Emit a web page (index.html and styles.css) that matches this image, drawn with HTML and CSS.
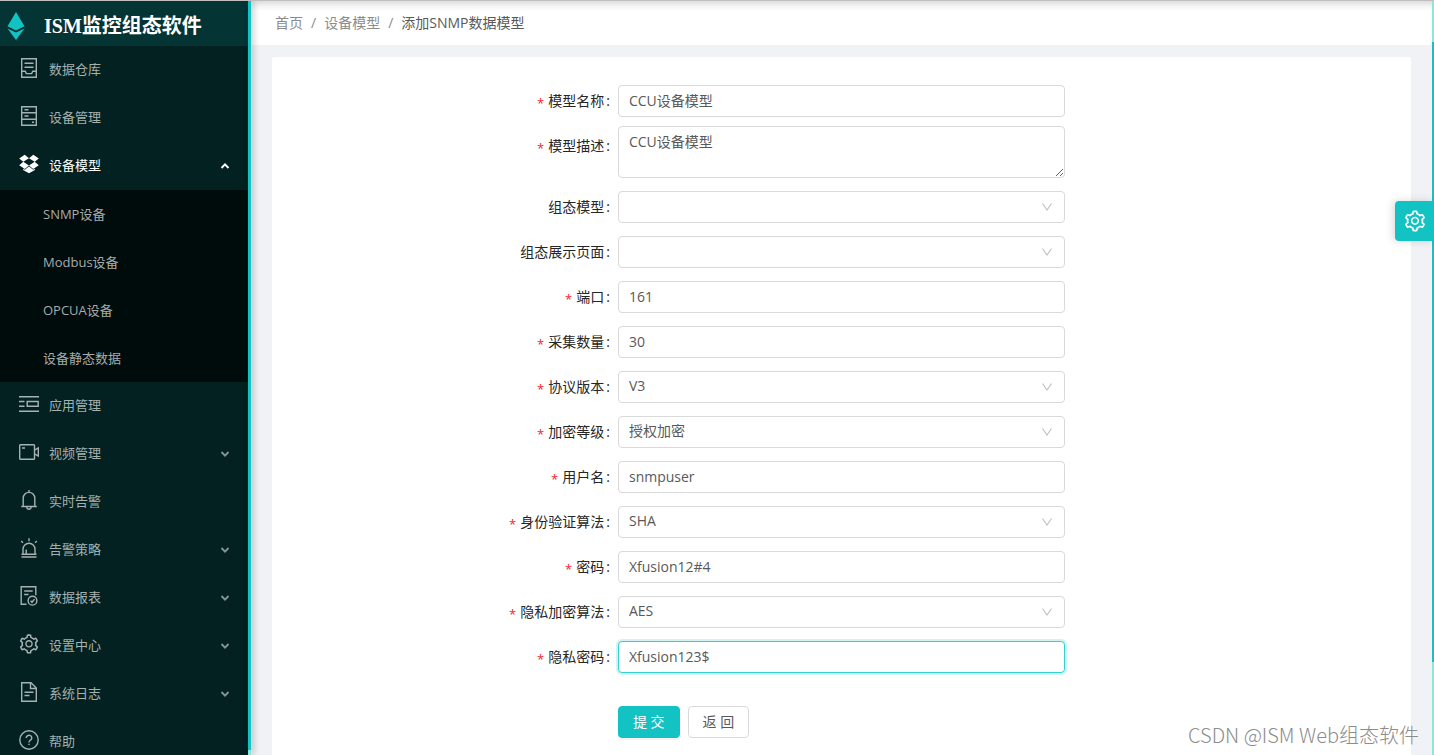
FILE: index.html
```html
<!DOCTYPE html>
<html lang="zh-CN">
<head>
<meta charset="utf-8">
<meta name="viewport" content="width=device-width, initial-scale=1">
<title>ISM监控组态软件</title>
<link rel="stylesheet" href="styles.css">
</head>
<body>
<svg class="defs" aria-hidden="true">
  <symbol id="gear" viewBox="0 0 1024 1024"><path fill="currentColor" d="M924.8 625.7l-65.5-56c3.1-19 4.7-38.4 4.7-57.8s-1.6-38.8-4.7-57.8l65.5-56a32.03 32.03 0 009.3-35.2l-.9-2.6a443.74 443.74 0 00-79.7-137.9l-1.8-2.1a32.12 32.12 0 00-35.1-9.5l-81.3 28.9c-30-24.6-63.5-44-99.7-57.6l-15.7-85a32.05 32.05 0 00-25.8-25.7l-2.7-.5c-52.1-9.4-106.9-9.4-159 0l-2.7.5a32.05 32.05 0 00-25.8 25.7l-15.8 85.4a351.86 351.86 0 00-99 57.4l-81.9-29.1a32 32 0 00-35.1 9.5l-1.8 2.1a446.02 446.02 0 00-79.7 137.9l-.9 2.6c-4.5 12.5-.8 26.5 9.3 35.2l66.3 56.6c-3.1 18.8-4.6 38-4.6 57.1 0 19.2 1.5 38.4 4.6 57.1L99 625.5a32.03 32.03 0 00-9.3 35.2l.9 2.6c18.1 50.4 44.9 96.9 79.7 137.9l1.8 2.1a32.12 32.12 0 0035.1 9.5l81.9-29.1c29.8 24.5 63.1 43.9 99 57.4l15.8 85.4a32.05 32.05 0 0025.8 25.7l2.7.5a449.4 449.4 0 00159 0l2.7-.5a32.05 32.05 0 0025.8-25.7l15.7-85a350 350 0 0099.7-57.6l81.3 28.9a32 32 0 0035.1-9.5l1.8-2.1c34.8-41.1 61.6-87.5 79.7-137.9l.9-2.6c4.5-12.3.8-26.3-9.3-35zM788.3 465.9c2.5 15.1 3.8 30.6 3.8 46.1s-1.3 31-3.8 46.1l-6.6 40.1 74.7 63.9a370.03 370.03 0 01-42.6 73.6L721 702.8l-31.4 25.8c-23.9 19.6-50.5 35-79.3 45.8l-38.1 14.3-17.9 97a377.5 377.5 0 01-85 0l-17.9-97.2-37.8-14.5c-28.5-10.8-55-26.2-78.7-45.7l-31.4-25.9-93.4 33.2c-17-22.9-31.2-47.6-42.6-73.6l75.5-64.5-6.5-40c-2.4-14.9-3.7-30.3-3.7-45.5 0-15.3 1.2-30.6 3.7-45.5l6.5-40-75.5-64.5c11.3-26.1 25.6-50.7 42.6-73.6l93.4 33.2 31.4-25.9c23.7-19.5 50.2-34.9 78.7-45.7l37.9-14.3 17.9-97.2c28.1-3.2 56.8-3.2 85 0l17.9 97 38.1 14.3c28.7 10.8 55.4 26.2 79.3 45.8l31.4 25.8 92.8-32.9c17 22.9 31.2 47.6 42.6 73.6L781.8 426l6.5 39.9zM512 326c-97.2 0-176 78.8-176 176s78.8 176 176 176 176-78.8 176-176-78.8-176-176-176zm79.2 255.2A111.6 111.6 0 01512 614c-29.9 0-58-11.7-79.2-32.8A111.6 111.6 0 01400 502c0-29.9 11.7-58 32.8-79.2C454 401.6 482.1 390 512 390c29.9 0 58 11.6 79.2 32.8A111.6 111.6 0 01624 502c0 29.9-11.7 58-32.8 79.2z"/></symbol>
  <symbol id="down" viewBox="0 0 10 10"><path d="M1.5 3l3.500 3.600L8.500 3" fill="none" stroke="currentColor" stroke-width="1.900"/></symbol>
  <symbol id="arrow" viewBox="0 0 12 12"><path d="M1.500 2.500L6 9l4.500-6.500" fill="none" stroke="currentColor" stroke-width="1.100"/></symbol>
</svg>

<div class="app">
  <aside class="sidebar">
    <div class="brand">
      <svg class="logo" viewBox="0 0 18 28" aria-hidden="true"><path d="M9 0L0.500 14.300 9 18.500l8.500-4.200z" fill="#13c2c2"/><path d="M.5 16.500L9 28l8.500-11.500L9 20.600z" fill="#13c2c2"/></svg>
      <h1 class="brand-name">ISM监控组态软件</h1>
    </div>
    <nav>
      <ul class="menu">
        <li><a class="item" href="#"><svg class="icon" viewBox="0 0 20 20"><path d="M2.700.7h14.600v18.600H2.700zM5.500 5.300h9M5.500 9.300h9M2.700 13.300h3.600l1 2.300h5.400l1-2.300h3.600"/></svg><span class="text">数据仓库</span></a></li>
        <li><a class="item" href="#"><svg class="icon" viewBox="0 0 20 20"><path d="M2.700.7h14.600v18.600H2.700zM2.700 6.700h14.600M2.700 13.300h14.600M5.500 3.700h4M5.500 10h4M13 16.200h2"/></svg><span class="text">设备管理</span></a></li>
        <li>
          <a class="item active" href="#"><svg class="icon solid" viewBox="0 0 20 20"><path d="M5.700.8L10 4.200 4.300 7.800.2 4.500zM14.300.8L10 4.200l5.700 3.600 4.100-3.300zM4.300 7.800L10 11.400l-4.200 3.500L.2 11.200zM15.700 7.800L10 11.400l4.200 3.500 5.600-3.700zM10 12.400l4.200 3.400 1.700-1.100v1.200L10 19.300l-5.900-3.400v-1.200l1.700 1.100z"/></svg><span class="text">设备模型</span><svg class="chev up"><use href="#down"/></svg></a>
          <ul class="submenu">
            <li><a class="subitem" href="#">SNMP设备</a></li>
            <li><a class="subitem" href="#">Modbus设备</a></li>
            <li><a class="subitem" href="#">OPCUA设备</a></li>
            <li><a class="subitem" href="#">设备静态数据</a></li>
          </ul>
        </li>
        <li><a class="item" href="#"><svg class="icon" viewBox="0 0 20 20"><path d="M0 2.700h20M0 17.300h20M0 7.500h5.500M0 12.300h5.500M8.200 7.500h11v4.800h-11z"/></svg><span class="text">应用管理</span></a></li>
        <li><a class="item" href="#"><svg class="icon" viewBox="0 0 20 20"><rect x=".7" y="2.700" width="14.800" height="14.600" rx=".8"/><path d="M3 6h3M15.500 8.200l3.800-2.300v8.200l-3.800-2.300"/></svg><span class="text">视频管理</span><svg class="chev"><use href="#down"/></svg></a></li>
        <li><a class="item" href="#"><svg class="icon" viewBox="0 0 20 20"><path d="M10 0v2M4.200 16.300V8.200a5.800 5.800 0 0111.600 0v8.100M2.200 16.500h15.600M7.800 17a2.200 2.200 0 004.400 0"/></svg><span class="text">实时告警</span></a></li>
        <li><a class="item" href="#"><svg class="icon" viewBox="0 0 20 20"><path d="M10 .3v3M2.200 3l1.800 1.800M17.800 3L16 4.800M4 16.200v-5a6 6 0 0112 0v5M2.500 16.200h15M2.500 19h15M7.200 15.500v-4"/></svg><span class="text">告警策略</span><svg class="chev"><use href="#down"/></svg></a></li>
        <li><a class="item" href="#"><svg class="icon" viewBox="0 0 20 20"><path d="M7.500 18.300H2.200V.7h14.600v8.500M5.200 5h8.500M5.200 8.500h4.300"/><circle cx="13.500" cy="14.700" r="4.400"/><path d="M11.600 14.800l1.400 1.500 2.500-3.200"/></svg><span class="text">数据报表</span><svg class="chev"><use href="#down"/></svg></a></li>
        <li><a class="item" href="#"><svg class="icon solid" viewBox="0 0 20 20"><use href="#gear" x="-1" y="-1" width="22" height="22"/></svg><span class="text">设置中心</span><svg class="chev"><use href="#down"/></svg></a></li>
        <li><a class="item" href="#"><svg class="icon" viewBox="0 0 20 20"><path d="M2.700.7h9.300l5.300 5.300v13.300H2.700zM11.500.7v5.800h5.800M5.500 10.200h9M5.500 13.500h5"/></svg><span class="text">系统日志</span><svg class="chev"><use href="#down"/></svg></a></li>
        <li><a class="item" href="#"><svg class="icon" viewBox="0 0 20 20"><circle cx="10" cy="10" r="9.200"/><path d="M7.200 8a2.800 2.600 0 115 1.500c-.8 1-2.200 1.200-2.200 2.900M10 13.700v1.400"/></svg><span class="text">帮助</span></a></li>
      </ul>
    </nav>
  </aside>
  <div class="rail"></div>

  <div class="page">
    <header class="topbar">
      <nav aria-label="路径"><ol class="crumbs">
        <li><a href="#">首页</a></li><li><a href="#">设备模型</a></li><li class="current">添加SNMP数据模型</li>
      </ol></nav>
    </header>
    <main class="card">
      <form class="form">
        <div class="row tight"><label class="label required" for="name">模型名称</label><input class="control" id="name" type="text" value="CCU设备模型"></div>
        <div class="row"><label class="label tall required" for="desc">模型描述</label><textarea class="control area" id="desc">CCU设备模型</textarea></div>
        <div class="row"><label class="label" for="model">组态模型</label><div class="pick"><select class="control" id="model"><option></option></select><svg class="arrow"><use href="#arrow"/></svg></div></div>
        <div class="row"><label class="label" for="view">组态展示页面</label><div class="pick"><select class="control" id="view"><option></option></select><svg class="arrow"><use href="#arrow"/></svg></div></div>
        <div class="row"><label class="label required" for="port">端口</label><input class="control" id="port" type="text" value="161"></div>
        <div class="row"><label class="label required" for="count">采集数量</label><input class="control" id="count" type="text" value="30"></div>
        <div class="row"><label class="label required" for="version">协议版本</label><div class="pick"><select class="control" id="version"><option>V3</option></select><svg class="arrow"><use href="#arrow"/></svg></div></div>
        <div class="row"><label class="label required" for="level">加密等级</label><div class="pick"><select class="control" id="level"><option>授权加密</option></select><svg class="arrow"><use href="#arrow"/></svg></div></div>
        <div class="row"><label class="label required" for="user">用户名</label><input class="control" id="user" type="text" value="snmpuser"></div>
        <div class="row"><label class="label required" for="auth">身份验证算法</label><div class="pick"><select class="control" id="auth"><option>SHA</option></select><svg class="arrow"><use href="#arrow"/></svg></div></div>
        <div class="row"><label class="label required" for="pass">密码</label><input class="control" id="pass" type="text" value="Xfusion12#4"></div>
        <div class="row"><label class="label required" for="priv">隐私加密算法</label><div class="pick"><select class="control" id="priv"><option>AES</option></select><svg class="arrow"><use href="#arrow"/></svg></div></div>
        <div class="row"><label class="label required" for="privpass">隐私密码</label><input class="control focused" id="privpass" type="text" value="Xfusion123$"></div>
        <div class="row"><div class="actions"><button class="btn primary" type="submit">提 交</button><button class="btn" type="button">返 回</button></div></div>
      </form>
    </main>
  </div>
  <div class="scroll"><div class="thumb"></div></div>
  <button class="settings" type="button" aria-label="设置"><svg class="settings-icon"><use href="#gear"/></svg></button>
  <div class="watermark">CSDN @ISM Web组态软件</div>
</div>
</body>
</html>
```

FILE: styles.css
```css
* { box-sizing: border-box; }

body {
  margin: 0;
  font-family: "Open Sans", "Noto Sans CJK SC", sans-serif;
  font-size: 14px;
  color: #262626;
}

ul, ol { margin: 0; padding: 0; list-style: none; }
a { color: inherit; text-decoration: none; }
.defs { display: none; }

.app {
  position: relative;
  display: flex;
  height: 100vh;
  overflow: hidden;
  border-top: 1px solid #bfbfbf;
  background: #f0f2f5;
}

/* Sidebar */
.sidebar {
  flex: none;
  width: 248px;
  overflow: hidden;
  background: #022120;
}

.rail {
  z-index: 1;
  flex: none;
  width: 3px;
  background: linear-gradient(to top, #87e8de 5px, #13c2c2 5px);
  box-shadow: 2px 0 6px rgba(0, 21, 41, 0.35);
}

.brand {
  display: flex;
  align-items: center;
  gap: 19px;
  height: 45px;
  padding: 4px 7px 0;
  background: #053434;
}

.logo { width: 18px; height: 28px; }

.brand-name {
  margin: 0;
  font: bold 20px/32px "Liberation Serif", "Noto Sans CJK SC", serif;
  color: #fff;
}

.item {
  display: flex;
  gap: 10px;
  height: 48px;
  padding: 12px 18px 0 19px;
  font-size: 13px;
  line-height: 23px;
  color: #a6b1b1;
}

.item.active { color: #fff; }

.icon {
  width: 20px;
  height: 20px;
  fill: none;
  stroke: currentColor;
  stroke-width: 1.4;
}

.icon.solid { fill: currentColor; stroke: none; }
.text { flex: 1; }
.chev { width: 10px; height: 24px; opacity: 0.8; }
.chev.up { transform: scaleY(-1); opacity: 1; }

.submenu { background: #000c0b; }

.subitem {
  display: block;
  padding-left: 43px;
  font-size: 13px;
  line-height: 48px;
  color: #a6abab;
}

/* Content */
.page { flex: 1; min-width: 0; display: flex; flex-direction: column; }

.topbar {
  flex: none;
  padding: 0 24px;
  background: #fff;
  box-shadow: inset 0 8px 8px -6px rgba(0, 0, 0, 0.2);
}

.crumbs { display: flex; line-height: 44px; color: #8c8c8c; }
.crumbs li + li::before { content: "/"; margin: 0 8px; color: #8c8c8c; }
.crumbs .current { color: #595959; }

.card {
  flex: 1;
  margin: 12px 21px 0;
  padding: 28px 33px;
  border-radius: 2px;
  background: #fff;
}

.row {
  display: grid;
  grid-template-columns: 7fr 10fr 7fr;
  margin-bottom: 13px;
}

.row.tight { margin-bottom: 9px; }

.label { height: 32px; line-height: 32px; text-align: right; white-space: nowrap; }
.label.tall { height: 40px; line-height: 40px; }
.label::after { content: ":"; margin: 0 8px 0 2px; }

.label.required::before {
  content: "*";
  margin-right: 4px;
  font-size: 13px;
  line-height: 1;
  vertical-align: -2px;
  color: #f5222d;
}

.control {
  display: block;
  width: 100%;
  height: 32px;
  margin: 0;
  padding: 0 10px 2px;
  border: 1px solid #d9d9d9;
  border-radius: 4px;
  outline: 0;
  background: #fff;
  font: inherit;
  line-height: 22px;
  color: #595959;
  appearance: none;
}

.control.area { height: 52px; padding: 4px 10px; resize: vertical; }

.control.focused {
  border-color: #36cfc9;
  box-shadow: 0 0 0 2px rgba(19, 194, 194, 0.2);
}

.pick { display: grid; align-items: center; }
.pick > * { grid-area: 1 / 1; }
.arrow {
  justify-self: end;
  width: 12px;
  height: 12px;
  margin-right: 12px;
  color: #bfbfbf;
  pointer-events: none;
}

.actions { grid-column: 2; display: flex; gap: 8px; padding-top: 20px; }

.btn {
  height: 32px;
  padding: 0 14px;
  border: 1px solid #d9d9d9;
  border-radius: 4px;
  background: #fff;
  font: inherit;
  line-height: 28px;
  color: #595959;
}

.btn.primary {
  border-color: #13c2c2;
  background: #13c2c2;
  color: #fff;
  box-shadow: 0 2px 0 rgba(0, 0, 0, 0.045);
}

/* Page scrollbar */
.scroll {
  flex: none;
  display: flex;
  flex-direction: column;
  width: 2px;
  padding-top: 41px;
  background: #87e8de;
}

.thumb { height: 87%; background: #13c2c2; }

/* Floating layers */
.settings {
  position: absolute;
  top: 200px;
  right: 0;
  display: flex;
  align-items: center;
  justify-content: center;
  width: 39px;
  height: 40px;
  padding: 0;
  border: 0;
  border-radius: 4px 0 0 4px;
  background: #13c2c2;
  color: #fff;
  box-shadow: -2px 0 8px rgba(0, 0, 0, 0.15);
}

.settings-icon { width: 24px; height: 24px; }

.watermark {
  position: absolute;
  right: 15px;
  bottom: 6px;
  font: 300 20px/28px "Noto Sans CJK SC", sans-serif;
  color: #8c8c8c;
  text-shadow: -1px -1px 0 #fff;
}
```
